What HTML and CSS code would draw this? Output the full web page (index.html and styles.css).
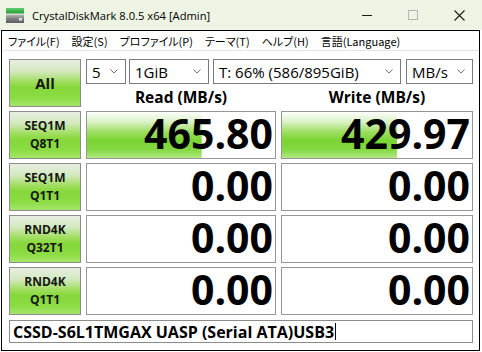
FILE: index.html
```html
<!DOCTYPE html>
<html lang="ja">
<head>
<meta charset="utf-8">
<title>CrystalDiskMark</title>
<link rel="stylesheet" href="styles.css">
</head>
<body>
<div class="titlebar">
  <svg class="appicon" viewBox="0 0 18 15" width="18" height="15">
    <defs>
      <linearGradient id="gb" x1="0" y1="0" x2="0" y2="1">
        <stop offset="0" stop-color="#b8b8b8"/>
        <stop offset="0.5" stop-color="#7d7d7d"/>
        <stop offset="1" stop-color="#5e5e5e"/>
      </linearGradient>
      <linearGradient id="gg" x1="0" y1="0" x2="0" y2="1">
        <stop offset="0" stop-color="#5fd06a"/>
        <stop offset="1" stop-color="#249a3a"/>
      </linearGradient>
    </defs>
    <rect x="0" y="0" width="18" height="5.5" fill="url(#gg)"/>
    <rect x="0" y="6.5" width="18" height="8.5" fill="url(#gb)"/>
    <rect x="13" y="10" width="3" height="2.5" fill="#e0e0e0"/>
  </svg>
  <span class="title">CrystalDiskMark 8.0.5 x64 [Admin]</span>
  <div class="winctl">
    <span class="ctl"><svg width="10" height="10" viewBox="0 0 10 10"><line x1="0" y1="5.5" x2="10" y2="5.5" stroke="#1a1a1a" stroke-width="1"/></svg></span>
    <span class="ctl"><svg width="10" height="10" viewBox="0 0 10 10"><rect x="0.5" y="0.5" width="9" height="9" fill="none" stroke="#b4b4b4" stroke-width="1"/></svg></span>
    <span class="ctl"><svg width="11" height="11" viewBox="0 0 11 11"><path d="M0.5 0.5 L10.5 10.5 M10.5 0.5 L0.5 10.5" stroke="#1a1a1a" stroke-width="1.1"/></svg></span>
  </div>
</div>
<div class="client">
  <div class="menubar">
    <span>ファイル(F)</span>
    <span>設定(S)</span>
    <span>プロファイル(P)</span>
    <span>テーマ(T)</span>
    <span>ヘルプ(H)</span>
    <span>言語(Language)</span>
  </div>
  <div class="main">
    <div class="grid">
      <div class="btn all">All</div>
      <div class="top">
        <div class="combos">
          <div class="combo c1"><span>5</span><svg class="chev" width="8" height="5" viewBox="0 0 8 5"><path d="M0.5 0.5 L4 4 L7.5 0.5" fill="none" stroke="#707070" stroke-width="1"/></svg></div>
          <div class="combo c2"><span>1GiB</span><svg class="chev" width="8" height="5" viewBox="0 0 8 5"><path d="M0.5 0.5 L4 4 L7.5 0.5" fill="none" stroke="#707070" stroke-width="1"/></svg></div>
          <div class="combo c3"><span>T: 66% (586/895GiB)</span><svg class="chev" width="8" height="5" viewBox="0 0 8 5"><path d="M0.5 0.5 L4 4 L7.5 0.5" fill="none" stroke="#707070" stroke-width="1"/></svg></div>
          <div class="combo c4"><span>MB/s</span><svg class="chev" width="8" height="5" viewBox="0 0 8 5"><path d="M0.5 0.5 L4 4 L7.5 0.5" fill="none" stroke="#707070" stroke-width="1"/></svg></div>
        </div>
        <div class="heads">
          <div class="head">Read (MB/s)</div>
          <div class="head">Write (MB/s)</div>
        </div>
      </div>

      <div class="btn label"><span>SEQ1M</span><span>Q8T1</span></div>
      <div class="val bar" style="background-size: 61% 100%">465.80</div>
      <div class="val bar" style="background-size: 60.5% 100%">429.97</div>

      <div class="btn label"><span>SEQ1M</span><span>Q1T1</span></div>
      <div class="val">0.00</div>
      <div class="val">0.00</div>

      <div class="btn label"><span>RND4K</span><span>Q32T1</span></div>
      <div class="val">0.00</div>
      <div class="val">0.00</div>

      <div class="btn label"><span>RND4K</span><span>Q1T1</span></div>
      <div class="val">0.00</div>
      <div class="val">0.00</div>
    </div>
    <div class="comment"><span>CSSD-S6L1TMGAX UASP (Serial ATA)USB3</span><span class="caret"></span></div>
  </div>
</div>
</body>
</html>
```
FILE: styles.css
```css
html, body {
  margin: 0;
  padding: 0;
}
body {
  width: 482px;
  height: 352px;
  overflow: hidden;
  background: #ffffff;
  font-family: "Open Sans", "Noto Sans", sans-serif;
  color: #000;
}

.titlebar {
  height: 30px;
  background: #eef4e3;
  display: flex;
  align-items: center;
}
.appicon {
  margin-left: 6px;
  margin-top: 1px;
  flex: none;
}
.title {
  margin-left: 8px;
  font-size: 11.2px;
  flex: 1;
  white-space: nowrap;
}
.winctl {
  display: flex;
  height: 30px;
}
.ctl {
  width: 46px;
  height: 30px;
  display: flex;
  align-items: center;
  justify-content: center;
}

.client {
  margin-left: 1px;
  width: 479px;
  height: 321px;
  box-sizing: border-box;
  border: 1px solid #000;
  display: flex;
  flex-direction: column;
}
.menubar {
  height: 19px;
  border-bottom: 1px solid #e4e4e4;
  display: flex;
  align-items: center;
  gap: 12px;
  padding-left: 6px;
  font-family: "Noto Sans CJK JP", sans-serif;
  font-feature-settings: "palt";
  font-size: 11px;
  white-space: nowrap;
}

.main {
  padding: 8px 0 0 7px;
}
.grid {
  display: grid;
  grid-template-columns: 72px 190px 192px;
  grid-auto-rows: 48px;
  column-gap: 5px;
  row-gap: 4px;
}

.btn {
  box-sizing: border-box;
  border: 1px solid #8c8c8c;
  background: linear-gradient(180deg, #e7eee1 0%, #d3e9c0 24%, #a2de63 46%, #86d83a 60%, #8bdb43 82%, #a6e568 100%);
  display: flex;
  flex-direction: column;
  align-items: center;
  justify-content: center;
  font-weight: 700;
  color: #161616;
}
.all {
  font-size: 15px;
}
.label {
  font-size: 12px;
  line-height: 18px;
}

.top {
  grid-column: 2 / 4;
  display: flex;
  flex-direction: column;
}
.combos {
  display: flex;
  height: 25px;
}
.combo {
  box-sizing: border-box;
  height: 25px;
  border: 1px solid #7a7a7a;
  background: #fff;
  display: flex;
  align-items: center;
  justify-content: space-between;
  padding: 0 7px 0 5px;
  font-size: 15px;
  white-space: nowrap;
}
.c1 { width: 40px; }
.c2 { width: 80px; margin-left: 3px; }
.c3 { width: 188px; margin-left: 4px; }
.c4 { width: 67px; margin-left: 5px; }
.chev {
  flex: none;
}
.heads {
  display: grid;
  grid-template-columns: 190px 192px;
  column-gap: 5px;
  margin-top: 3px;
}
.head {
  text-align: center;
  font-size: 15.5px;
  font-weight: 700;
  line-height: 20px;
}

.val {
  box-sizing: border-box;
  border: 1px solid #969696;
  background-color: #fff;
  display: flex;
  align-items: center;
  justify-content: flex-end;
  padding: 0 2px 3px 0;
  font-size: 41px;
  font-weight: 700;
  line-height: 1;
  color: #000;
}
.bar {
  background-image: linear-gradient(180deg, #fdfefb 0%, #d9f1c4 22%, #9bde5e 44%, #7bd433 62%, #84d842 82%, #b4e986 100%);
  background-repeat: no-repeat;
}

.comment {
  margin-top: 5px;
  width: 464px;
  height: 23px;
  box-sizing: border-box;
  border: 1px solid #8c8c8c;
  display: flex;
  align-items: center;
  padding-left: 3px;
  font-size: 16px;
  font-weight: 700;
  white-space: nowrap;
}
.caret {
  width: 1px;
  height: 17px;
  background: #000;
  margin-left: 1px;
}
```
